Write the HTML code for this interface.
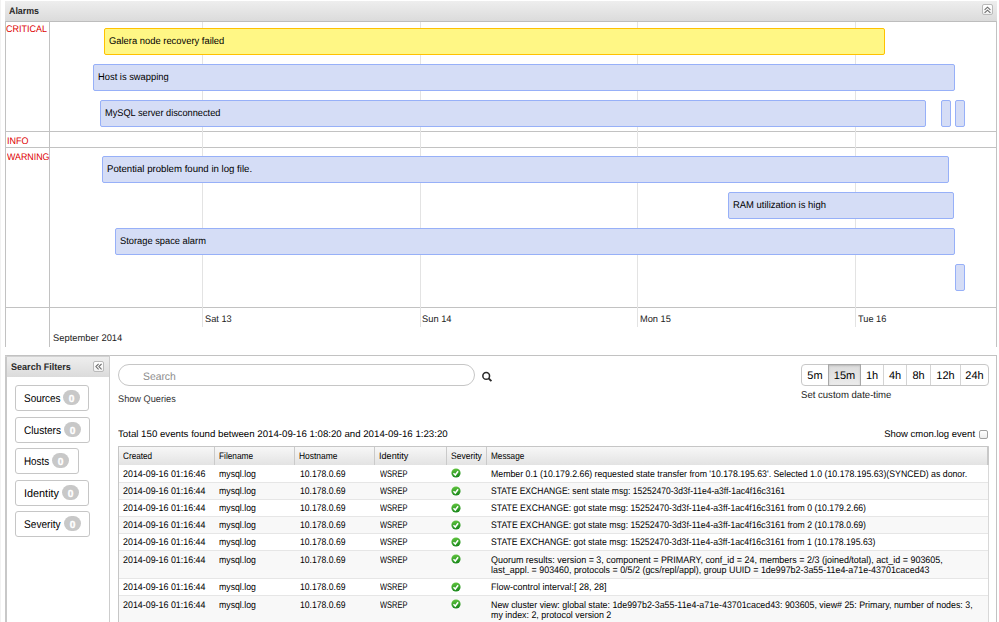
<!DOCTYPE html>
<html><head><meta charset="utf-8">
<style>
*{box-sizing:border-box;margin:0;padding:0}
html,body{width:999px;height:622px;overflow:hidden;background:#fff;font-family:"Liberation Sans",sans-serif;color:#1a1a1a}
.a{position:absolute}
.t{position:absolute;white-space:pre;line-height:1;transform-origin:0 0;text-rendering:geometricPrecision}
.hl{position:absolute;height:1px;background:#c2c2c2}
.vl{position:absolute;width:1px;background:#c2c2c2}
.dl{position:absolute;width:1px;background:#e3e3e3}
.bar{position:absolute;height:27px;background:#d5ddf6;border:1px solid #97b0f8;border-radius:2px}
.bar.y{background:#fff785;border-color:#ffc200}
.hdr{position:absolute;background:linear-gradient(#eeeeee,#dbdbdb)}
.btn{position:absolute;width:11px;height:11px;border:1px solid #bababa;border-radius:2px;background:linear-gradient(#fff,#f2f2f2)}
.fb{position:absolute;left:15px;height:26px;border:1px solid #c6c6c6;border-radius:3px;background:#fff}
.badge{position:absolute;width:17px;height:15px;border-radius:8px;background:#c8c8c8}
</style></head><body>
<div class="a" style="left:0;top:0;width:1px;height:622px;background:#f2f2f2"></div>
<div class="hdr" style="left:5px;top:1px;width:992px;height:21px;border-bottom:1px solid #bdbdbd"></div>
<div class="btn" style="left:982px;top:4px;"><svg width="9" height="9" viewBox="0 0 9 9" style="position:absolute;left:0;top:0"><path d="M1.6 4.9 L4.5 2.2 L7.4 4.9 M1.6 7.9 L4.5 5.2 L7.4 7.9" fill="none" stroke="#6a6a6a" stroke-width="1.05"/></svg></div>
<div class="vl" style="left:5px;top:21px;height:326px"></div>
<div class="vl" style="left:49px;top:21px;height:326px"></div>
<div class="vl" style="left:996px;top:21px;height:326px"></div>
<div class="hl" style="left:5px;top:131px;width:992px"></div>
<div class="hl" style="left:5px;top:147px;width:992px"></div>
<div class="hl" style="left:5px;top:307px;width:992px"></div>
<div class="dl" style="left:202px;top:22px;height:305px"></div>
<div class="dl" style="left:420px;top:22px;height:305px"></div>
<div class="dl" style="left:637px;top:22px;height:305px"></div>
<div class="dl" style="left:855px;top:22px;height:305px"></div>
<div class="bar y" style="left:104px;top:28px;width:781px"></div>
<div class="bar " style="left:93px;top:64px;width:862px"></div>
<div class="bar " style="left:100px;top:100px;width:826px"></div>
<div class="bar " style="left:941px;top:100px;width:10px"></div>
<div class="bar " style="left:955px;top:100px;width:10px"></div>
<div class="bar " style="left:102px;top:156px;width:847px"></div>
<div class="bar " style="left:728px;top:192px;width:226px"></div>
<div class="bar " style="left:115px;top:228px;width:840px"></div>
<div class="bar " style="left:955px;top:264px;width:10px"></div>
<div class="hl" style="left:5px;top:355px;width:992px"></div>
<div class="vl" style="left:5px;top:355px;height:267px;width:2px;background:#c8c8c8"></div>
<div class="hl" style="left:5px;top:356px;width:105px;background:#d2d2d2"></div>
<div class="vl" style="left:109px;top:355px;height:267px;background:#cdcdcd"></div>
<div class="vl" style="left:996px;top:355px;height:267px"></div>
<div class="hdr" style="left:7px;top:357px;width:102px;height:20px"></div>
<div class="btn" style="left:93px;top:361px;"><svg width="9" height="9" viewBox="0 0 9 9" style="position:absolute;left:0;top:0"><path d="M4.6 1.8 L1.9 4.6 L4.6 7.4 M7.6 1.8 L4.9 4.6 L7.6 7.4" fill="none" stroke="#6a6a6a" stroke-width="1.05"/></svg></div>
<div class="fb" style="top:385px;width:74px"></div>
<div class="badge" style="left:63px;top:390px"></div>
<div class="fb" style="top:417px;width:75px"></div>
<div class="badge" style="left:64px;top:422px"></div>
<div class="fb" style="top:448px;width:64px"></div>
<div class="badge" style="left:52px;top:453px"></div>
<div class="fb" style="top:480px;width:74px"></div>
<div class="badge" style="left:62px;top:485px"></div>
<div class="fb" style="top:511px;width:75px"></div>
<div class="badge" style="left:64px;top:516px"></div>
<div class="a" style="left:118px;top:364px;width:357px;height:22px;border:1px solid #c6c6c6;border-radius:11px;background:#fff"></div>
<svg class="a" style="left:480px;top:369px" width="14" height="15" viewBox="0 0 14 15"><circle cx="6.2" cy="6.9" r="3.35" fill="none" stroke="#2a2a2a" stroke-width="1.55"/><line x1="8.6" y1="9.4" x2="11.4" y2="12.2" stroke="#2a2a2a" stroke-width="1.9"/></svg>
<div class="a" style="left:801px;top:364px;width:188px;height:22px;border:1px solid #c8c8c8;border-radius:4px;background:#fff"></div>
<div class="a" style="left:828px;top:364px;width:33px;height:22px;background:linear-gradient(#dcdcdc,#ebebeb);border:1px solid #a8a8a8;box-shadow:inset 0 1px 2px rgba(0,0,0,.15)"></div>
<div class="vl" style="left:883px;top:365px;height:20px;background:#d4d4d4"></div>
<div class="vl" style="left:906px;top:365px;height:20px;background:#d4d4d4"></div>
<div class="vl" style="left:930px;top:365px;height:20px;background:#d4d4d4"></div>
<div class="vl" style="left:960px;top:365px;height:20px;background:#d4d4d4"></div>
<div class="a" style="left:979px;top:430px;width:9px;height:9px;border:1px solid #a0a0a0;border-radius:2px;background:linear-gradient(#fff,#ececec)"></div>
<div class="a" style="left:118px;top:446px;width:871px;height:176px;border:1px solid #c6c6c6;border-bottom:none;border-right:1px solid #d8d8d8"></div>
<div class="a" style="left:119px;top:447px;width:870px;height:18px;background:linear-gradient(#f7f7f7,#e3e3e3);border-right:2px solid #c8c8c8"></div>
<div class="vl" style="left:214px;top:447px;height:18px;background:#cacaca"></div>
<div class="vl" style="left:294px;top:447px;height:18px;background:#cacaca"></div>
<div class="vl" style="left:374px;top:447px;height:18px;background:#cacaca"></div>
<div class="vl" style="left:446px;top:447px;height:18px;background:#cacaca"></div>
<div class="vl" style="left:486px;top:447px;height:18px;background:#cacaca"></div>
<div class="a" style="left:119px;top:465px;width:869px;height:17px;background:#fff;"></div>
<svg class="a" style="left:451px;top:468px" width="10" height="10" viewBox="0 0 10 10"><defs><linearGradient id="g0" x1="0.3" y1="0" x2="0.5" y2="1"><stop offset="0" stop-color="#62c63f"/><stop offset="1" stop-color="#17861a"/></linearGradient></defs><circle cx="5" cy="5" r="4.6" fill="url(#g0)"/><path d="M2.5 5.3 L4.3 7 L7.1 3.2" fill="none" stroke="#fff" stroke-width="1.5"/></svg>
<div class="a" style="left:119px;top:482px;width:869px;height:17px;background:#f8f8f8;border-top:1px solid #e6e6e6"></div>
<svg class="a" style="left:451px;top:486px" width="10" height="10" viewBox="0 0 10 10"><defs><linearGradient id="g1" x1="0.3" y1="0" x2="0.5" y2="1"><stop offset="0" stop-color="#62c63f"/><stop offset="1" stop-color="#17861a"/></linearGradient></defs><circle cx="5" cy="5" r="4.6" fill="url(#g1)"/><path d="M2.5 5.3 L4.3 7 L7.1 3.2" fill="none" stroke="#fff" stroke-width="1.5"/></svg>
<div class="a" style="left:119px;top:499px;width:869px;height:17px;background:#fff;border-top:1px solid #e6e6e6"></div>
<svg class="a" style="left:451px;top:503px" width="10" height="10" viewBox="0 0 10 10"><defs><linearGradient id="g2" x1="0.3" y1="0" x2="0.5" y2="1"><stop offset="0" stop-color="#62c63f"/><stop offset="1" stop-color="#17861a"/></linearGradient></defs><circle cx="5" cy="5" r="4.6" fill="url(#g2)"/><path d="M2.5 5.3 L4.3 7 L7.1 3.2" fill="none" stroke="#fff" stroke-width="1.5"/></svg>
<div class="a" style="left:119px;top:516px;width:869px;height:17px;background:#f8f8f8;border-top:1px solid #e6e6e6"></div>
<svg class="a" style="left:451px;top:520px" width="10" height="10" viewBox="0 0 10 10"><defs><linearGradient id="g3" x1="0.3" y1="0" x2="0.5" y2="1"><stop offset="0" stop-color="#62c63f"/><stop offset="1" stop-color="#17861a"/></linearGradient></defs><circle cx="5" cy="5" r="4.6" fill="url(#g3)"/><path d="M2.5 5.3 L4.3 7 L7.1 3.2" fill="none" stroke="#fff" stroke-width="1.5"/></svg>
<div class="a" style="left:119px;top:533px;width:869px;height:17px;background:#fff;border-top:1px solid #e6e6e6"></div>
<svg class="a" style="left:451px;top:537px" width="10" height="10" viewBox="0 0 10 10"><defs><linearGradient id="g4" x1="0.3" y1="0" x2="0.5" y2="1"><stop offset="0" stop-color="#62c63f"/><stop offset="1" stop-color="#17861a"/></linearGradient></defs><circle cx="5" cy="5" r="4.6" fill="url(#g4)"/><path d="M2.5 5.3 L4.3 7 L7.1 3.2" fill="none" stroke="#fff" stroke-width="1.5"/></svg>
<div class="a" style="left:119px;top:550px;width:869px;height:28px;background:#f8f8f8;border-top:1px solid #e6e6e6"></div>
<svg class="a" style="left:451px;top:554px" width="10" height="10" viewBox="0 0 10 10"><defs><linearGradient id="g5" x1="0.3" y1="0" x2="0.5" y2="1"><stop offset="0" stop-color="#62c63f"/><stop offset="1" stop-color="#17861a"/></linearGradient></defs><circle cx="5" cy="5" r="4.6" fill="url(#g5)"/><path d="M2.5 5.3 L4.3 7 L7.1 3.2" fill="none" stroke="#fff" stroke-width="1.5"/></svg>
<div class="a" style="left:119px;top:578px;width:869px;height:17px;background:#fff;border-top:1px solid #e6e6e6"></div>
<svg class="a" style="left:451px;top:582px" width="10" height="10" viewBox="0 0 10 10"><defs><linearGradient id="g6" x1="0.3" y1="0" x2="0.5" y2="1"><stop offset="0" stop-color="#62c63f"/><stop offset="1" stop-color="#17861a"/></linearGradient></defs><circle cx="5" cy="5" r="4.6" fill="url(#g6)"/><path d="M2.5 5.3 L4.3 7 L7.1 3.2" fill="none" stroke="#fff" stroke-width="1.5"/></svg>
<div class="a" style="left:119px;top:595px;width:869px;height:30px;background:#f8f8f8;border-top:1px solid #e6e6e6"></div>
<svg class="a" style="left:451px;top:599px" width="10" height="10" viewBox="0 0 10 10"><defs><linearGradient id="g7" x1="0.3" y1="0" x2="0.5" y2="1"><stop offset="0" stop-color="#62c63f"/><stop offset="1" stop-color="#17861a"/></linearGradient></defs><circle cx="5" cy="5" r="4.6" fill="url(#g7)"/><path d="M2.5 5.3 L4.3 7 L7.1 3.2" fill="none" stroke="#fff" stroke-width="1.5"/></svg>
<div class="t" style="left:9.00px;top:7.00px;font-size:9.5px;color:#2a2a2a;font-weight:bold;transform:scaleX(0.9311);">Alarms</div>
<div class="t" style="left:6.00px;top:25.00px;font-size:9.6px;color:#dd0000;transform:scaleX(0.9378);">CRITICAL</div>
<div class="t" style="left:6.50px;top:137.00px;font-size:9.6px;color:#dd0000;transform:scaleX(0.9380);">INFO</div>
<div class="t" style="left:6.50px;top:153.00px;font-size:9.6px;color:#dd0000;transform:scaleX(0.9236);">WARNING</div>
<div class="t" style="left:108.80px;top:37.00px;font-size:9.8px;color:#000;transform:scaleX(0.9580);">Galera node recovery failed</div>
<div class="t" style="left:97.80px;top:73.00px;font-size:9.8px;color:#000;transform:scaleX(0.9546);">Host is swapping</div>
<div class="t" style="left:104.80px;top:109.00px;font-size:9.8px;color:#000;transform:scaleX(0.9405);">MySQL server disconnected</div>
<div class="t" style="left:106.80px;top:165.00px;font-size:9.8px;color:#000;transform:scaleX(0.9831);">Potential problem found in log file.</div>
<div class="t" style="left:732.80px;top:201.00px;font-size:9.8px;color:#000;transform:scaleX(0.9638);">RAM utilization is high</div>
<div class="t" style="left:119.80px;top:237.00px;font-size:9.8px;color:#000;transform:scaleX(0.9502);">Storage space alarm</div>
<div class="t" style="left:205.00px;top:315.00px;font-size:9.5px;color:#222;transform:scaleX(0.9720);">Sat 13</div>
<div class="t" style="left:422.40px;top:315.00px;font-size:9.5px;color:#222;transform:scaleX(0.9793);">Sun 14</div>
<div class="t" style="left:640.25px;top:315.00px;font-size:9.5px;color:#222;transform:scaleX(0.9751);">Mon 15</div>
<div class="t" style="left:857.80px;top:315.00px;font-size:9.5px;color:#222;transform:scaleX(0.9680);">Tue 16</div>
<div class="t" style="left:53.00px;top:334.00px;font-size:9.5px;color:#222;transform:scaleX(0.9865);">September 2014</div>
<div class="t" style="left:10.80px;top:363.00px;font-size:9.5px;color:#2a2a2a;font-weight:bold;transform:scaleX(0.9532);">Search Filters</div>
<div class="t" style="left:23.50px;top:394.00px;font-size:11.2px;color:#000;transform:scaleX(0.8917);">Sources</div>
<div class="t" style="left:68.66px;top:395.00px;font-size:10.2px;color:#fff;font-weight:bold;-webkit-text-stroke:0.35px #fff;">0</div>
<div class="t" style="left:23.50px;top:426.00px;font-size:11.2px;color:#000;transform:scaleX(0.9018);">Clusters</div>
<div class="t" style="left:69.66px;top:427.00px;font-size:10.2px;color:#fff;font-weight:bold;-webkit-text-stroke:0.35px #fff;">0</div>
<div class="t" style="left:23.50px;top:457.00px;font-size:11.2px;color:#000;transform:scaleX(0.8808);">Hosts</div>
<div class="t" style="left:57.66px;top:458.00px;font-size:10.2px;color:#fff;font-weight:bold;-webkit-text-stroke:0.35px #fff;">0</div>
<div class="t" style="left:23.50px;top:489.00px;font-size:11.2px;color:#000;transform:scaleX(0.9701);">Identity</div>
<div class="t" style="left:67.66px;top:490.00px;font-size:10.2px;color:#fff;font-weight:bold;-webkit-text-stroke:0.35px #fff;">0</div>
<div class="t" style="left:23.50px;top:520.00px;font-size:11.2px;color:#000;transform:scaleX(0.9055);">Severity</div>
<div class="t" style="left:69.66px;top:521.00px;font-size:10.2px;color:#fff;font-weight:bold;-webkit-text-stroke:0.35px #fff;">0</div>
<div class="t" style="left:142.50px;top:372.00px;font-size:10.8px;color:#8c8c8c;transform:scaleX(0.9585);">Search</div>
<div class="t" style="left:118.00px;top:395.00px;font-size:9.6px;color:#333;transform:scaleX(0.9591);">Show Queries</div>
<div class="t" style="left:807.36px;top:371.00px;font-size:11px;color:#000;">5m</div>
<div class="t" style="left:833.80px;top:371.00px;font-size:11px;color:#000;">15m</div>
<div class="t" style="left:865.88px;top:371.00px;font-size:11px;color:#000;">1h</div>
<div class="t" style="left:888.88px;top:371.00px;font-size:11px;color:#000;">4h</div>
<div class="t" style="left:912.38px;top:371.00px;font-size:11px;color:#000;">8h</div>
<div class="t" style="left:936.32px;top:371.00px;font-size:11px;color:#000;">12h</div>
<div class="t" style="left:965.32px;top:371.00px;font-size:11px;color:#000;">24h</div>
<div class="t" style="left:801.00px;top:391.00px;font-size:9.9px;color:#222;transform:scaleX(0.9688);">Set custom date-time</div>
<div class="t" style="left:118.00px;top:430.00px;font-size:9.5px;color:#000;transform:scaleX(1.0182);">Total 150 events found between 2014-09-16 1:08:20 and 2014-09-16 1:23:20</div>
<div class="t" style="left:884.20px;top:430.00px;font-size:9.5px;color:#000;">Show cmon.log event</div>
<div class="t" style="left:123.10px;top:451.00px;font-size:9.4px;color:#000;transform:scaleX(0.8723);">Created</div>
<div class="t" style="left:219.10px;top:451.00px;font-size:9.4px;color:#000;transform:scaleX(0.8843);">Filename</div>
<div class="t" style="left:299.10px;top:451.00px;font-size:9.4px;color:#000;transform:scaleX(0.9009);">Hostname</div>
<div class="t" style="left:379.10px;top:451.00px;font-size:9.4px;color:#000;transform:scaleX(0.9691);">Identity</div>
<div class="t" style="left:451.10px;top:451.00px;font-size:9.4px;color:#000;transform:scaleX(0.9092);">Severity</div>
<div class="t" style="left:491.10px;top:451.00px;font-size:9.4px;color:#000;transform:scaleX(0.8752);">Message</div>
<div class="t" style="left:122.90px;top:470.00px;font-size:9.6px;color:#000;transform:scaleX(0.9260);">2014-09-16 01:16:46</div>
<div class="t" style="left:219.40px;top:470.00px;font-size:9.6px;color:#000;transform:scaleX(0.9104);">mysql.log</div>
<div class="t" style="left:299.50px;top:470.00px;font-size:9.6px;color:#000;transform:scaleX(0.8977);">10.178.0.69</div>
<div class="t" style="left:379.60px;top:470.00px;font-size:9.6px;color:#000;transform:scaleX(0.7815);">WSREP</div>
<div class="t" style="left:491.40px;top:470.00px;font-size:9.5px;color:#000;transform:scaleX(0.9210);">Member 0.1 (10.179.2.66) requested state transfer from &#x27;10.178.195.63&#x27;. Selected 1.0 (10.178.195.63)(SYNCED) as donor.</div>
<div class="t" style="left:122.90px;top:487.00px;font-size:9.6px;color:#000;transform:scaleX(0.9260);">2014-09-16 01:16:44</div>
<div class="t" style="left:219.40px;top:487.00px;font-size:9.6px;color:#000;transform:scaleX(0.9104);">mysql.log</div>
<div class="t" style="left:299.50px;top:487.00px;font-size:9.6px;color:#000;transform:scaleX(0.8977);">10.178.0.69</div>
<div class="t" style="left:379.60px;top:487.00px;font-size:9.6px;color:#000;transform:scaleX(0.7815);">WSREP</div>
<div class="t" style="left:491.40px;top:487.00px;font-size:9.5px;color:#000;transform:scaleX(0.8996);">STATE EXCHANGE: sent state msg: 15252470-3d3f-11e4-a3ff-1ac4f16c3161</div>
<div class="t" style="left:122.90px;top:504.00px;font-size:9.6px;color:#000;transform:scaleX(0.9260);">2014-09-16 01:16:44</div>
<div class="t" style="left:219.40px;top:504.00px;font-size:9.6px;color:#000;transform:scaleX(0.9104);">mysql.log</div>
<div class="t" style="left:299.50px;top:504.00px;font-size:9.6px;color:#000;transform:scaleX(0.8977);">10.178.0.69</div>
<div class="t" style="left:379.60px;top:504.00px;font-size:9.6px;color:#000;transform:scaleX(0.7815);">WSREP</div>
<div class="t" style="left:491.40px;top:504.00px;font-size:9.5px;color:#000;transform:scaleX(0.9131);">STATE EXCHANGE: got state msg: 15252470-3d3f-11e4-a3ff-1ac4f16c3161 from 0 (10.179.2.66)</div>
<div class="t" style="left:122.90px;top:521.00px;font-size:9.6px;color:#000;transform:scaleX(0.9260);">2014-09-16 01:16:44</div>
<div class="t" style="left:219.40px;top:521.00px;font-size:9.6px;color:#000;transform:scaleX(0.9104);">mysql.log</div>
<div class="t" style="left:299.50px;top:521.00px;font-size:9.6px;color:#000;transform:scaleX(0.8977);">10.178.0.69</div>
<div class="t" style="left:379.60px;top:521.00px;font-size:9.6px;color:#000;transform:scaleX(0.7815);">WSREP</div>
<div class="t" style="left:491.40px;top:521.00px;font-size:9.5px;color:#000;transform:scaleX(0.9131);">STATE EXCHANGE: got state msg: 15252470-3d3f-11e4-a3ff-1ac4f16c3161 from 2 (10.178.0.69)</div>
<div class="t" style="left:122.90px;top:538.00px;font-size:9.6px;color:#000;transform:scaleX(0.9260);">2014-09-16 01:16:44</div>
<div class="t" style="left:219.40px;top:538.00px;font-size:9.6px;color:#000;transform:scaleX(0.9104);">mysql.log</div>
<div class="t" style="left:299.50px;top:538.00px;font-size:9.6px;color:#000;transform:scaleX(0.8977);">10.178.0.69</div>
<div class="t" style="left:379.60px;top:538.00px;font-size:9.6px;color:#000;transform:scaleX(0.7815);">WSREP</div>
<div class="t" style="left:491.40px;top:538.00px;font-size:9.5px;color:#000;transform:scaleX(0.9126);">STATE EXCHANGE: got state msg: 15252470-3d3f-11e4-a3ff-1ac4f16c3161 from 1 (10.178.195.63)</div>
<div class="t" style="left:122.90px;top:556.00px;font-size:9.6px;color:#000;transform:scaleX(0.9260);">2014-09-16 01:16:44</div>
<div class="t" style="left:219.40px;top:556.00px;font-size:9.6px;color:#000;transform:scaleX(0.9104);">mysql.log</div>
<div class="t" style="left:299.50px;top:556.00px;font-size:9.6px;color:#000;transform:scaleX(0.8977);">10.178.0.69</div>
<div class="t" style="left:379.60px;top:556.00px;font-size:9.6px;color:#000;transform:scaleX(0.7815);">WSREP</div>
<div class="t" style="left:491.40px;top:556.00px;font-size:9.5px;color:#000;transform:scaleX(0.9435);">Quorum results: version = 3, component = PRIMARY, conf_id = 24, members = 2/3 (joined/total), act_id = 903605,</div>
<div class="t" style="left:491.40px;top:566.00px;font-size:9.5px;color:#000;transform:scaleX(0.9369);">last_appl. = 903460, protocols = 0/5/2 (gcs/repl/appl), group UUID = 1de997b2-3a55-11e4-a71e-43701caced43</div>
<div class="t" style="left:122.90px;top:583.00px;font-size:9.6px;color:#000;transform:scaleX(0.9260);">2014-09-16 01:16:44</div>
<div class="t" style="left:219.40px;top:583.00px;font-size:9.6px;color:#000;transform:scaleX(0.9104);">mysql.log</div>
<div class="t" style="left:299.50px;top:583.00px;font-size:9.6px;color:#000;transform:scaleX(0.8977);">10.178.0.69</div>
<div class="t" style="left:379.60px;top:583.00px;font-size:9.6px;color:#000;transform:scaleX(0.7815);">WSREP</div>
<div class="t" style="left:491.40px;top:583.00px;font-size:9.5px;color:#000;transform:scaleX(0.9460);">Flow-control interval:[ 28, 28]</div>
<div class="t" style="left:122.90px;top:601.00px;font-size:9.6px;color:#000;transform:scaleX(0.9260);">2014-09-16 01:16:44</div>
<div class="t" style="left:219.40px;top:601.00px;font-size:9.6px;color:#000;transform:scaleX(0.9104);">mysql.log</div>
<div class="t" style="left:299.50px;top:601.00px;font-size:9.6px;color:#000;transform:scaleX(0.8977);">10.178.0.69</div>
<div class="t" style="left:379.60px;top:601.00px;font-size:9.6px;color:#000;transform:scaleX(0.7815);">WSREP</div>
<div class="t" style="left:491.40px;top:601.00px;font-size:9.5px;color:#000;transform:scaleX(0.9312);">New cluster view: global state: 1de997b2-3a55-11e4-a71e-43701caced43: 903605, view# 25: Primary, number of nodes: 3,</div>
<div class="t" style="left:491.40px;top:611.00px;font-size:9.5px;color:#000;transform:scaleX(0.9337);">my index: 2, protocol version 2</div>
</body></html>
